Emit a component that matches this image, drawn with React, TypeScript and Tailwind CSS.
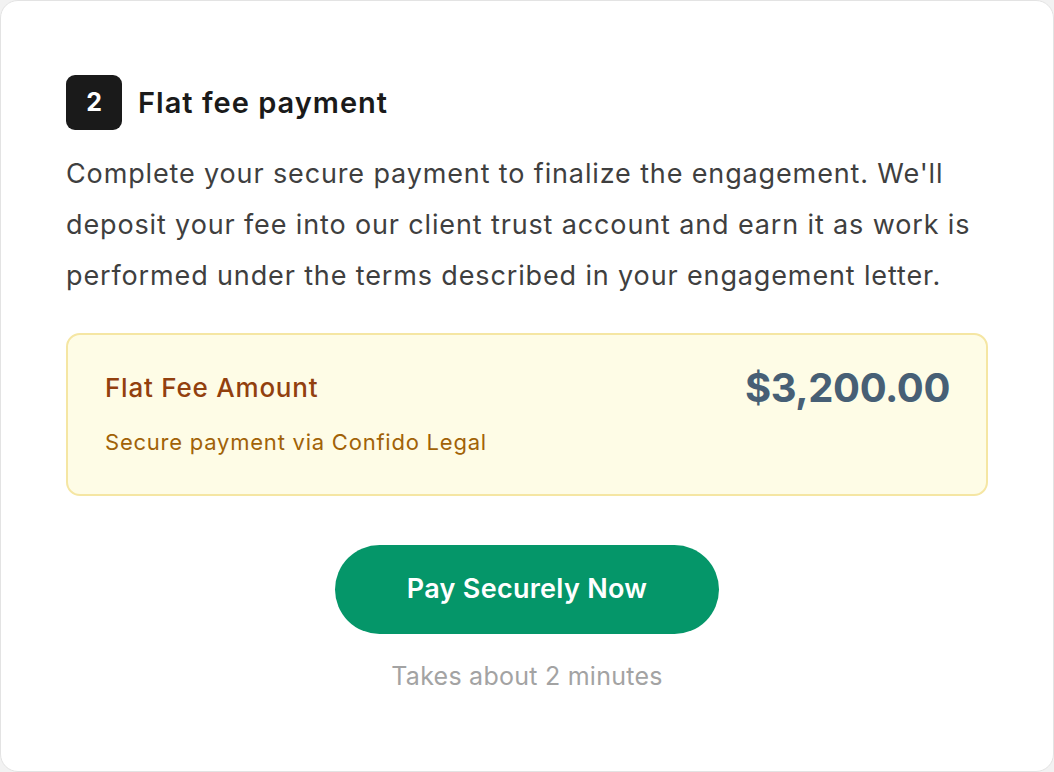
export default function App() {
  return (
    <div className="w-[1054px] h-[772px] bg-[#f2f2f2]" style={{ fontFamily: 'Inter, "Noto Sans", sans-serif' }}>
      <div className="w-full h-full bg-white border border-[#e3e3e3] rounded-[18px] pl-[65px] pr-[60px] pt-[74px]">
        <div className="flex items-center gap-[16px]">
          <div className="w-[56px] h-[55px] rounded-[9px] bg-[#1a1a1a] flex items-center justify-center text-white text-[25px] font-bold">
            2
          </div>
          <h2 className="text-[29px] font-semibold text-[#1a1a1a] tracking-[0.035em]">Flat fee payment</h2>
        </div>
        <p className="mt-[18px] text-[27px] leading-[51px] text-[#3f3f3f] tracking-[0.032em]">
          Complete your secure payment to finalize the engagement. We'll deposit your fee into our client trust account and earn it as work is performed under the terms described in your engagement letter.
        </p>
        <div className="mt-[32px] mr-[5px] h-[163px] rounded-[14px] border-2 border-[#f5e6a3] bg-[#fefce6] pl-[37px] pr-[36px] pt-[33px] flex justify-between">
          <div>
            <div className="text-[26px] font-medium text-[#92400e] leading-[40px] tracking-[0.03em]">Flat Fee Amount</div>
            <div className="mt-[19px] text-[22px] text-[#a16207] leading-[30px] tracking-[0.035em]">Secure payment via Confido Legal</div>
          </div>
          <div className="text-[40px] font-bold text-[#475f75] leading-[44px] tracking-[-0.01em] -mt-[2px]">$3,200.00</div>
        </div>
        <div className="flex flex-col items-center mt-[49px] mr-[5px]">
          <button className="w-[384px] h-[89px] rounded-full bg-[#059669] text-white text-[27px] font-semibold tracking-[0.01em]">
            Pay Securely Now
          </button>
          <div className="mt-[24px] text-[25px] text-[#a3a3a3] tracking-[0.01em]">Takes about 2 minutes</div>
        </div>
      </div>
    </div>
  );
}
